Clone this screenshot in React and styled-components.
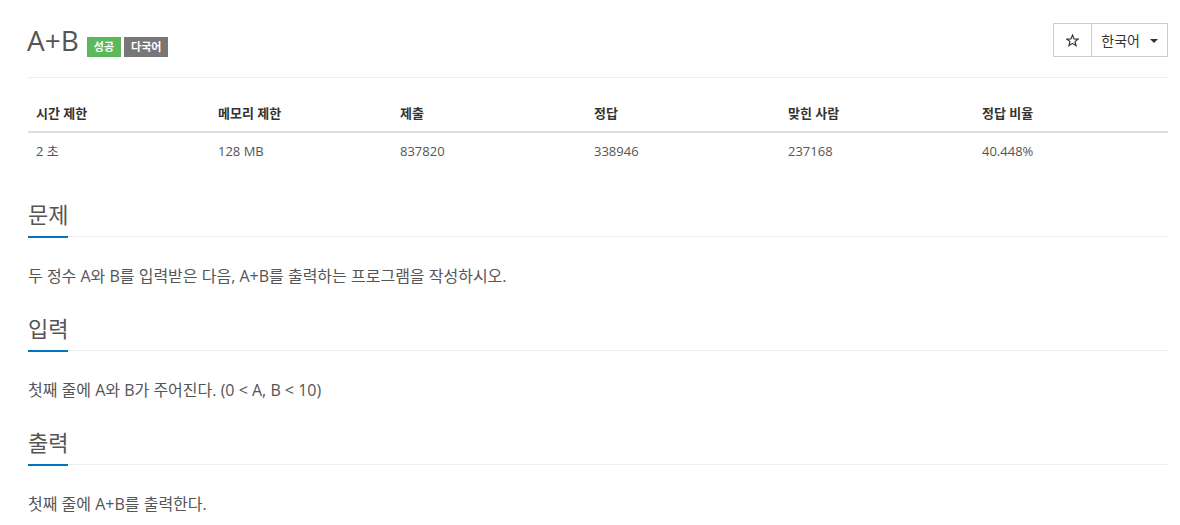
import React from "react";
import styled, { createGlobalStyle } from "styled-components";

const GlobalStyle = createGlobalStyle`
  body {
    margin: 0;
    background: #fff;
    font-family: "Open Sans", "Noto Sans CJK KR", sans-serif;
    color: #555;
  }
`;

const info = [
  { label: "시간 제한", value: "2 초" },
  { label: "메모리 제한", value: "128 MB" },
  { label: "제출", value: "837820" },
  { label: "정답", value: "338946" },
  { label: "맞힌 사람", value: "237168" },
  { label: "정답 비율", value: "40.448%" },
];

const sections = [
  { title: "문제", body: "두 정수 A와 B를 입력받은 다음, A+B를 출력하는 프로그램을 작성하시오." },
  { title: "입력", body: "첫째 줄에 A와 B가 주어진다. (0 < A, B < 10)" },
  { title: "출력", body: "첫째 줄에 A+B를 출력한다." },
];

const App = () => {
  return (
    <>
      <GlobalStyle />
      <Container>
        <PageHeader>
          <TitleGroup>
            <Title>A+B</Title>
            <Label color="#5cb85c">성공</Label>
            <Label color="#777">다국어</Label>
          </TitleGroup>
          <BtnGroup>
            <Btn>
              <svg width="13" height="13" viewBox="0 0 24 24">
                <polygon
                  points="12,2 14.9,9 22.5,9.3 16.6,14.1 18.6,21.5 12,17.3 5.4,21.5 7.4,14.1 1.5,9.3 9.1,9"
                  fill="none"
                  stroke="#333"
                  strokeWidth="2.2"
                  strokeLinejoin="miter"
                />
              </svg>
            </Btn>
            <Btn wide>
              한국어
              <Caret />
            </Btn>
          </BtnGroup>
        </PageHeader>

        <InfoTable>
          {info.map((item) => (
            <HeadCell key={item.label}>{item.label}</HeadCell>
          ))}
          {info.map((item) => (
            <DataCell key={item.label}>{item.value}</DataCell>
          ))}
        </InfoTable>

        {sections.map((s) => (
          <Section key={s.title}>
            <Headline>
              <HeadlineTitle>{s.title}</HeadlineTitle>
            </Headline>
            <Paragraph>{s.body}</Paragraph>
          </Section>
        ))}
      </Container>
    </>
  );
};

export default App;

const Container = styled.div`
  width: 1140px;
  padding-left: 28px;
`;

const PageHeader = styled.div`
  display: flex;
  justify-content: space-between;
  align-items: center;
  padding: 23px 0 20px;
  border-bottom: 1px solid #eee;
`;

const TitleGroup = styled.div`
  display: flex;
  align-items: flex-end;
  height: 34px;
`;

const Title = styled.h1`
  margin: 0 8px 0 -1px;
  font-size: 28px;
  font-weight: 400;
  line-height: 34px;
  color: #555;
  align-self: center;
`;

const Label = styled.span`
  display: inline-block;
  height: 20px;
  line-height: 20px;
  padding: 0 7px;
  margin-right: 3px;
  background: ${(p) => p.color};
  color: #fff;
  font-size: 11px;
  font-weight: 700;
`;

const BtnGroup = styled.div`
  display: flex;
`;

const Btn = styled.div`
  display: flex;
  align-items: center;
  height: 32px;
  padding: ${(p) => (p.wide ? "0 9px 0 9px" : "0 12px")};
  border: 1px solid #ccc;
  margin-left: ${(p) => (p.wide ? "-1px" : "0")};
  color: #333;
  font-size: 14px;
  background: #fff;
`;

const Caret = styled.span`
  display: inline-block;
  width: 0;
  height: 0;
  margin-left: 10px;
  margin-top: 1px;
  border-top: 4px solid #333;
  border-left: 4px solid transparent;
  border-right: 4px solid transparent;
`;

const InfoTable = styled.div`
  display: grid;
  grid-template-columns: 182px 182px repeat(4, 1fr);
  margin: 17px 0 34px;
`;

const HeadCell = styled.div`
  padding: 8px;
  line-height: 20px;
  font-size: 13px;
  font-weight: 700;
  color: #333;
  border-bottom: 2px solid #ddd;
`;

const DataCell = styled.div`
  padding: 8px;
  line-height: 20px;
  font-size: 13px;
  color: #555;
`;

const Section = styled.section`
  & + & {
    margin-top: 30px;
  }
`;

const Headline = styled.div`
  display: flex;
  border-bottom: 1px dotted #ddd;
  margin-bottom: 29px;
`;

const HeadlineTitle = styled.h2`
  margin: 0 0 -2px;
  padding-bottom: 10px;
  font-size: 22px;
  font-weight: 400;
  line-height: 23px;
  color: #555;
  border-bottom: 2px solid #0076c0;
`;

const Paragraph = styled.p`
  margin: 0;
  font-size: 16px;
  line-height: 21px;
  color: #555;
`;
